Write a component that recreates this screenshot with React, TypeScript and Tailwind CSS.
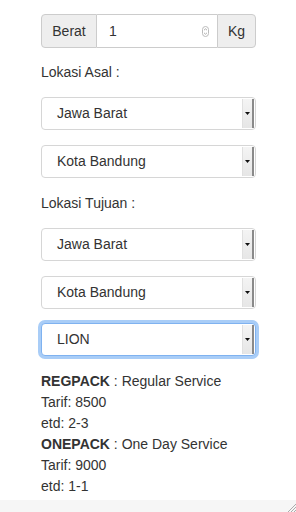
import React from "react";

function Select({ value, focused }: { value: string; focused?: boolean }) {
  return (
    <div
      className={
        "relative flex h-[33px] items-center rounded-[4px] border bg-white " +
        (focused
          ? "border-[#7fb2f0] shadow-[0_0_0_3px_#a9cdf7]"
          : "border-[#d6d6d6]")
      }
    >
      <span className="pl-[15px] text-[14px] text-[#333]">{value}</span>
      <div className="absolute right-[1px] top-[1px] bottom-[1px] flex w-[12px] items-center justify-center border-l border-[#e0e0e0] border-r-2 border-r-[#8a8a8a] bg-gradient-to-b from-[#f4f4f4] to-[#e6e6e6]">
        <svg width="5" height="3" viewBox="0 0 5 3">
          <path d="M0 0h5L2.5 3z" fill="#111" />
        </svg>
      </div>
    </div>
  );
}

export default function App() {
  return (
    <div
      className="relative h-[512px] w-[296px] bg-white text-[#333]"
      style={{ fontFamily: '"Helvetica Neue", "Liberation Sans", Arial, sans-serif' }}
    >
      <div className="ml-[41px] w-[215px] pt-[14px]">
        <div className="flex h-[34px] text-[14px]">
          <div className="flex w-[56px] items-center justify-center rounded-l-[4px] border border-[#ccc] bg-[#eee]">
            Berat
          </div>
          <div className="flex flex-1 items-center justify-between border-y border-[#ccc] bg-white pl-[12px] pr-[8px]">
            <span>1</span>
            <svg width="7" height="11" viewBox="0 0 7 11">
              <rect x="0.5" y="0.5" width="6" height="10" rx="3" fill="none" stroke="#bbb" />
              <path d="M2 4.2 3.5 2.8 5 4.2M2 6.8 3.5 8.2 5 6.8" fill="none" stroke="#999" strokeWidth="0.8" />
            </svg>
          </div>
          <div className="flex w-[39px] items-center justify-center rounded-r-[4px] border border-[#ccc] bg-[#eee]">
            Kg
          </div>
        </div>

        <div className="mt-[14px] h-[20px] text-[14px] leading-[20px]">Lokasi Asal :</div>
        <div className="mt-[15px]">
          <Select value="Jawa Barat" />
        </div>
        <div className="mt-[15px]">
          <Select value="Kota Bandung" />
        </div>

        <div className="mt-[15px] h-[20px] text-[14px] leading-[20px]">Lokasi Tujuan :</div>
        <div className="mt-[15px]">
          <Select value="Jawa Barat" />
        </div>
        <div className="mt-[15px]">
          <Select value="Kota Bandung" />
        </div>
        <div className="mt-[14px]">
          <Select value="LION" focused />
        </div>

        <div className="mt-[15px] text-[14px] leading-[21px]">
          <div>
            <b>REGPACK</b> : Regular Service
          </div>
          <div>Tarif: 8500</div>
          <div>etd: 2-3</div>
          <div>
            <b>ONEPACK</b> : One Day Service
          </div>
          <div>Tarif: 9000</div>
          <div>etd: 1-1</div>
        </div>
      </div>

      <div className="absolute bottom-0 left-0 right-0 h-[12px] bg-[#f6f6f6]">
        <svg className="absolute bottom-0 right-0" width="10" height="10" viewBox="0 0 10 10">
          <path d="M10 2 2 10M10 5 5 10M10 8 8 10" stroke="#999" strokeWidth="0.8" />
        </svg>
      </div>
    </div>
  );
}
